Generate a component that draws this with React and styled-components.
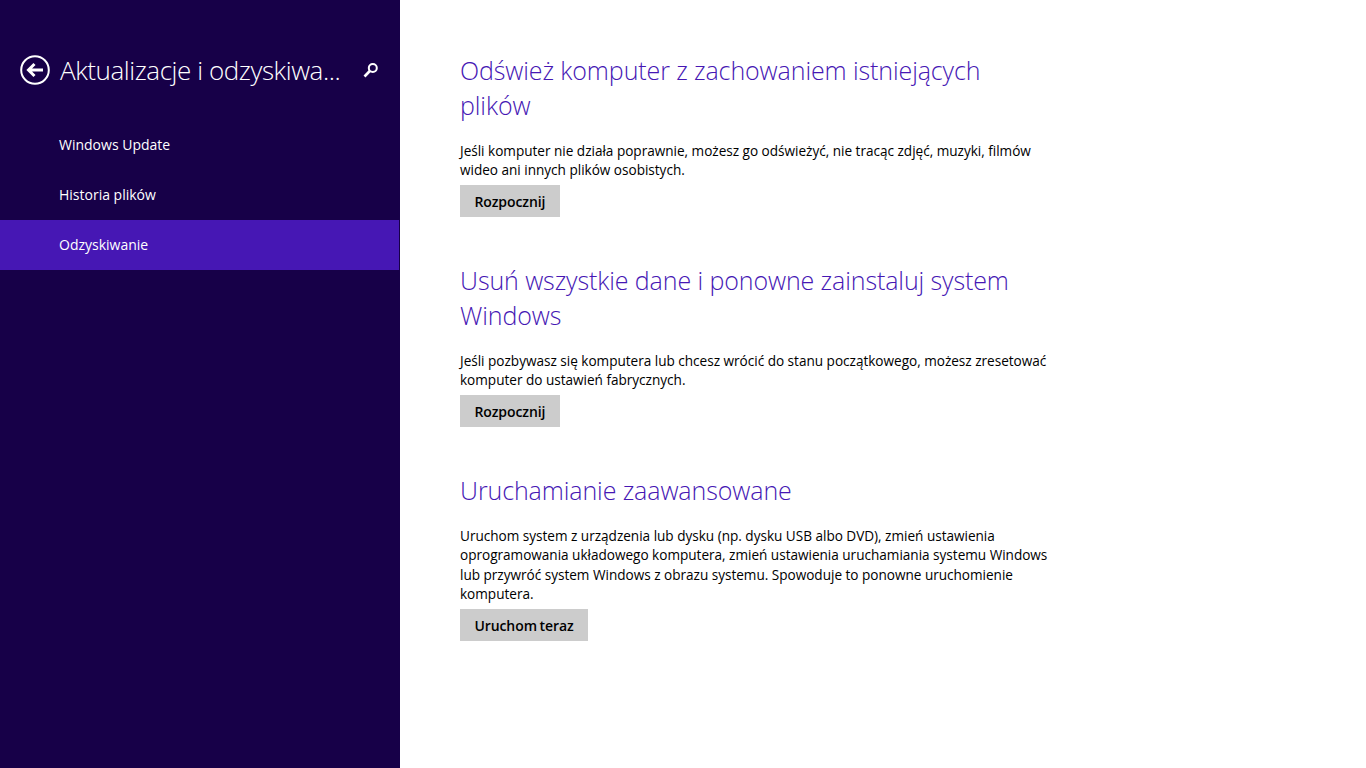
import React from "react";
import styled, { createGlobalStyle } from "styled-components";

const Global = createGlobalStyle`
  html, body { margin: 0; padding: 0; height: 100%; background: #fff; }
  #root { height: 100%; }
  * { box-sizing: border-box; }
`;
const font = `"Open Sans", "Noto Sans", "Liberation Sans", sans-serif`;

const Page = styled.div`
  display: flex; width: 100%; height: 768px; overflow: hidden; font-family: ${font};
`;
const Sidebar = styled.aside`
  width: 400px; flex: none; background: #170048; padding-top: 50px; display: flex; flex-direction: column;
`;
const Header = styled.header`
  display: flex; align-items: center; height: 40px; padding: 0 21px 0 20px; margin-bottom: 30px;
`;
const BackIcon = styled.svg`
  width: 30px; height: 30px; flex: none; margin-right: 10px;
`;
const Title = styled.h1`
  flex: 1; margin: 0; font-size: 26px; font-weight: 300; color: #fff; white-space: nowrap; letter-spacing: -0.43px;
`;
const SearchIcon = styled.svg`
  width: 16px; height: 16px; flex: none;
`;
const Nav = styled.nav`display: flex; flex-direction: column;`;
const NavItem = styled.a`
  display: flex; align-items: center; height: 50px; width: 399px; padding: 0 0 2px 59px; color: #fff;
  font-size: 14px; background: ${p => (p.$active ? "#4617b4" : "transparent")};
`;
const Main = styled.main`
  flex: 1; padding: 53px 0 0 60px; display: flex; flex-direction: column; gap: 46px;
`;
const Section = styled.section`display: flex; flex-direction: column; align-items: flex-start;`;
const Heading = styled.h2`
  margin: 0 0 18px; font-size: 25px; line-height: 35px; font-weight: 300; color: #4617b4; white-space: nowrap;
  letter-spacing: -0.1px;
`;
const Desc = styled.p`
  margin: 0 0 5px; font-size: 13.6px; line-height: 19.45px; color: #000; white-space: nowrap; letter-spacing: -0.02px;
`;
const Button = styled.button`
  height: 32px; padding: 1px 14.4px 0; border: 0; background: #ccc; color: #000; font-family: ${font};
  font-size: 14px; font-weight: 600; letter-spacing: -0.08px; word-spacing: -1px;
`;

const sections = [
  { h: ["Odśwież komputer z zachowaniem istniejących", "plików"], d: ["Jeśli komputer nie działa poprawnie, możesz go odświeżyć, nie tracąc zdjęć, muzyki, filmów", "wideo ani innych plików osobistych."], b: "Rozpocznij" },
  { h: ["Usuń wszystkie dane i ponowne zainstaluj system", "Windows"], d: ["Jeśli pozbywasz się komputera lub chcesz wrócić do stanu początkowego, możesz zresetować", "komputer do ustawień fabrycznych."], b: "Rozpocznij" },
  { h: ["Uruchamianie zaawansowane"], d: ["Uruchom system z urządzenia lub dysku (np. dysku USB albo DVD), zmień ustawienia", "oprogramowania układowego komputera, zmień ustawienia uruchamiania systemu Windows", "lub przywróć system Windows z obrazu systemu. Spowoduje to ponowne uruchomienie", "komputera."], b: "Uruchom teraz" },
];
const lines = a => a.map((t, i) => <React.Fragment key={i}>{i > 0 && <br />}{t}</React.Fragment>);

export default function App() {
  return (
    <Page>
      <Global />
      <Sidebar>
        <Header>
          <BackIcon viewBox="0 0 30 30" fill="none" stroke="#fff">
            <circle cx="15" cy="15" r="13.8" strokeWidth="2" />
            <path d="M23 15H9M14.5 9L8.5 15L14.5 21" strokeWidth="3" />
          </BackIcon>
          <Title>Aktualizacje i odzyskiwa...</Title>
          <SearchIcon viewBox="0 0 16 16" fill="none" stroke="#fff">
            <circle cx="9.8" cy="6" r="4" strokeWidth="2" />
            <path d="M6.8 9L1.5 14.5" strokeWidth="2.6" />
          </SearchIcon>
        </Header>
        <Nav>
          <NavItem>Windows Update</NavItem>
          <NavItem>Historia plików</NavItem>
          <NavItem $active>Odzyskiwanie</NavItem>
        </Nav>
      </Sidebar>
      <Main>
        {sections.map((s, i) => (
          <Section key={i}>
            <Heading>{lines(s.h)}</Heading>
            <Desc>{lines(s.d)}</Desc>
            <Button>{s.b}</Button>
          </Section>
        ))}
      </Main>
    </Page>
  );
}
